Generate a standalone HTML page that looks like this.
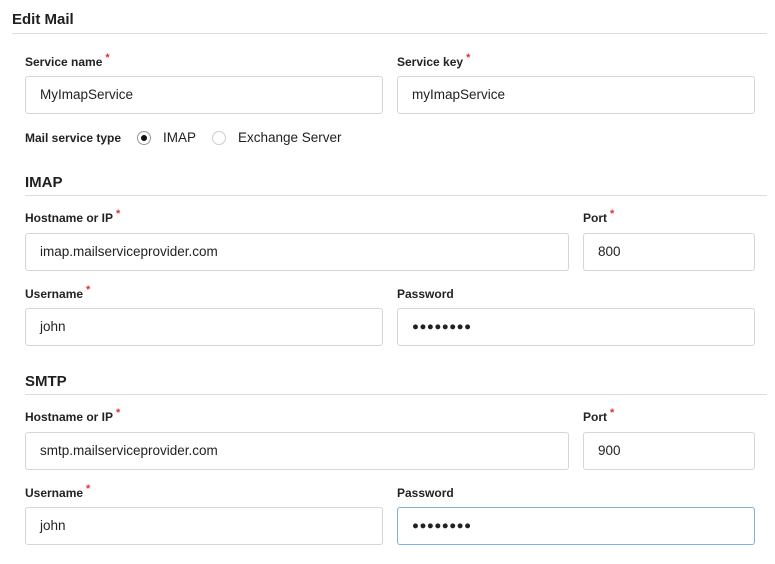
<!DOCTYPE html>
<html><head><style>
body{margin:0;width:775px;height:564px;background:#fff;font-family:"Liberation Sans",sans-serif;color:#1f1f1f;position:relative;overflow:hidden}
.a{position:absolute}
.t{font-weight:bold;font-size:15px;line-height:18px}
.l{font-weight:bold;font-size:12px;line-height:16px;color:#222}
.l i{color:#e03030;font-style:normal;font-size:11px;position:relative;top:-5px;margin-left:3px}
.hr{height:1px;background:#dcdcdc}
.in{box-sizing:border-box;border:1px solid #d6d6d6;border-radius:3px;height:38px;font-size:13.5px;line-height:36px;padding-left:14px;color:#222}
.f{border-color:#7fb1de}
.pw{font-size:11.5px;letter-spacing:0.5px}
.r{width:14px;height:14px;border:1px solid #bbb;border-radius:50%;box-sizing:border-box}
</style></head><body>
<div class="a t" style="left:12px;top:11px">Edit Mail</div>
<div class="a hr" style="left:12px;top:33px;width:755px"></div>

<div class="a l" style="left:25px;top:54px">Service name<i>*</i></div>
<div class="a l" style="left:397px;top:54px">Service key<i>*</i></div>
<div class="a in" style="left:25px;top:76px;width:358px">MyImapService</div>
<div class="a in" style="left:397px;top:76px;width:358px">myImapService</div>

<div class="a l" style="left:25px;top:130px">Mail service type</div>
<div class="a r" style="left:137px;top:131px;border-color:#999"><div style="width:6px;height:6px;background:#111;border-radius:50%;margin:3px"></div></div>
<div class="a" style="left:163px;top:130px;font-size:13.5px;line-height:16px">IMAP</div>
<div class="a r" style="left:212px;top:131px;border-color:#ccc"></div>
<div class="a" style="left:238px;top:130px;font-size:13.5px;line-height:16px">Exchange Server</div>

<div class="a t" style="left:25px;top:174px">IMAP</div>
<div class="a hr" style="left:25px;top:195px;width:742px"></div>
<div class="a l" style="left:25px;top:210px">Hostname or IP<i>*</i></div>
<div class="a l" style="left:583px;top:210px">Port<i>*</i></div>
<div class="a in" style="left:25px;top:233px;width:544px">imap.mailserviceprovider.com</div>
<div class="a in" style="left:583px;top:233px;width:172px">800</div>
<div class="a l" style="left:25px;top:286px">Username<i>*</i></div>
<div class="a l" style="left:397px;top:286px">Password</div>
<div class="a in" style="left:25px;top:308px;width:358px">john</div>
<div class="a in pw" style="left:397px;top:308px;width:358px">●●●●●●●●</div>

<div class="a t" style="left:25px;top:373px">SMTP</div>
<div class="a hr" style="left:25px;top:394px;width:742px"></div>
<div class="a l" style="left:25px;top:409px">Hostname or IP<i>*</i></div>
<div class="a l" style="left:583px;top:409px">Port<i>*</i></div>
<div class="a in" style="left:25px;top:432px;width:544px">smtp.mailserviceprovider.com</div>
<div class="a in" style="left:583px;top:432px;width:172px">900</div>
<div class="a l" style="left:25px;top:485px">Username<i>*</i></div>
<div class="a l" style="left:397px;top:485px">Password</div>
<div class="a in" style="left:25px;top:507px;width:358px">john</div>
<div class="a in pw f" style="left:397px;top:507px;width:358px">●●●●●●●●</div>
</body></html>
